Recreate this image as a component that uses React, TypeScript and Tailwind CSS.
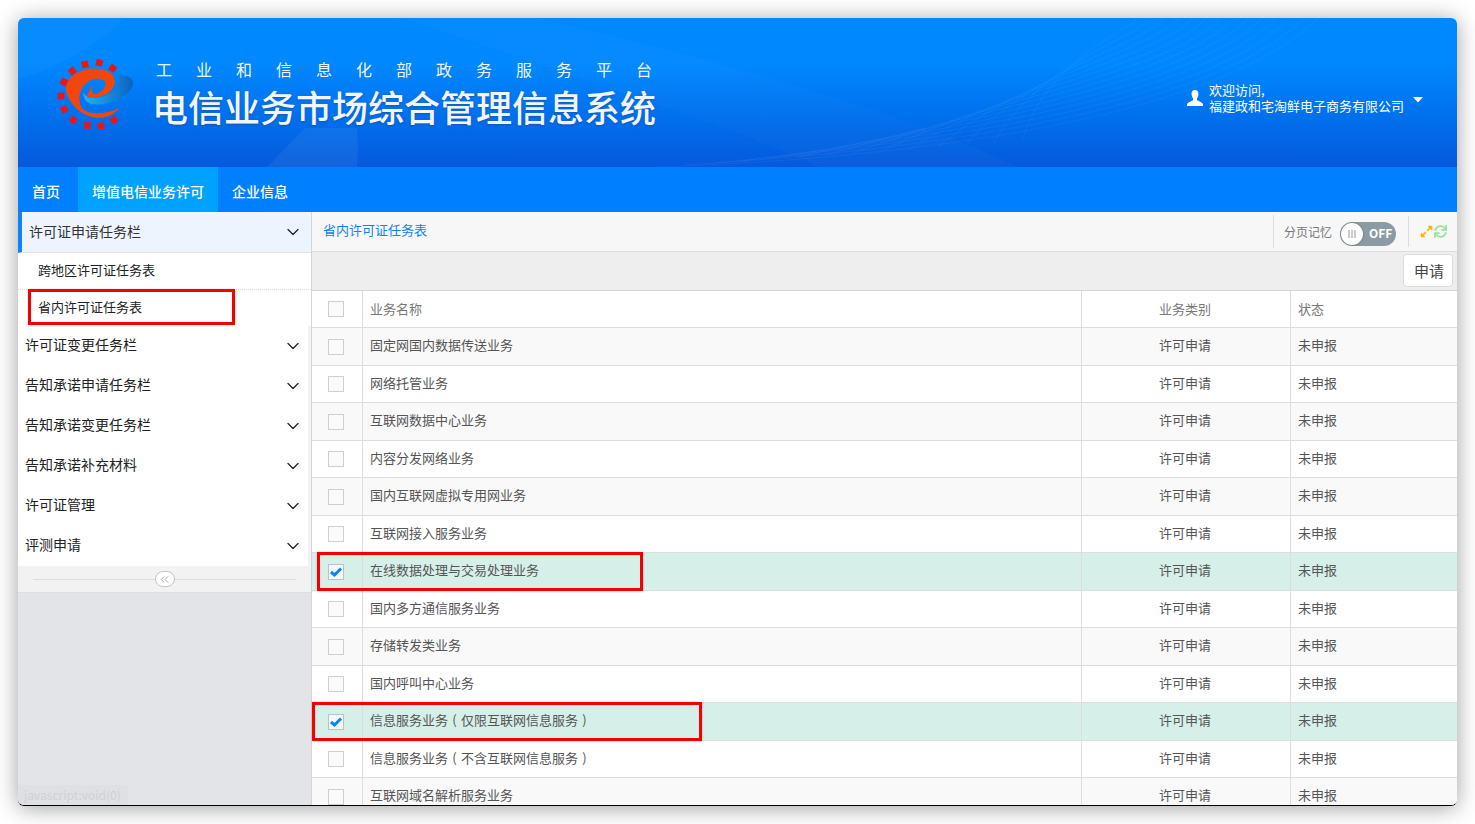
import React from "react";
import { ChevronDown, ChevronsLeft } from "lucide-react";
import { FaExpandAlt, FaSync } from "react-icons/fa";

const rows: [string, string, boolean][] = [
  ["固定网国内数据传送业务", "", false],
  ["网络托管业务", "", false],
  ["互联网数据中心业务", "", false],
  ["内容分发网络业务", "", false],
  ["国内互联网虚拟专用网业务", "", false],
  ["互联网接入服务业务", "", false],
  ["在线数据处理与交易处理业务", "", true],
  ["国内多方通信服务业务", "", false],
  ["存储转发类业务", "", false],
  ["国内呼叫中心业务", "", false],
  ["信息服务业务", "仅限互联网信息服务", true],
  ["信息服务业务", "不含互联网信息服务", false],
  ["互联网域名解析服务业务", "", false],
];
const menus = ["许可证变更任务栏", "告知承诺申请任务栏", "告知承诺变更任务栏", "告知承诺补充材料", "许可证管理", "评测申请"];

function Logo() {
  const squares = [
    [97, 75], [135, 55], [178, 50], [218, 67], [72, 108], [63, 150],
    [73, 190], [100, 222], [142, 238], [183, 240], [222, 222],
  ];
  return (
    <svg width="80" height="72" viewBox="48 33 240 216" className="shrink-0">
      <defs>
        <linearGradient id="sw" x1="0" y1="0" x2="1" y2="0">
          <stop offset="0" stopColor="#1fb4ee" />
          <stop offset="1" stopColor="#0a62c4" />
        </linearGradient>
      </defs>
      {squares.map(([x, y]) => {
        const deg = (Math.atan2(y - 150, x - 155) * 180) / Math.PI + 90;
        return <rect key={`${x}-${y}`} x={x - 10} y={y - 10} width="20" height="20" fill="#e8161a" transform={`rotate(${deg} ${x} ${y})`} />;
      })}
      <path d="M235 88 C265 85 285 100 278 120 C265 155 200 180 160 175 C140 172 130 160 130 140 C140 160 175 160 205 145 C230 130 245 110 235 88 Z" fill="url(#sw)" />
      <path d="M240 185 C215 215 170 225 135 205 C95 185 70 140 80 115 C90 85 130 65 170 68 C215 70 232 95 222 120 C212 145 175 160 140 155 C160 150 195 135 197 115 C198 100 170 92 148 105 C120 122 110 155 125 185 C140 205 190 210 240 185 Z" fill="#f2470c" />
      <path d="M140 150 C150 135 150 125 160 118 C150 130 155 145 175 148 C160 155 150 155 140 150 Z" fill="#f2470c" />
    </svg>
  );
}

function Check({ on }: { on: boolean }) {
  return (
    <span className={`flex h-4 w-4 items-center justify-center border ${on ? "border-[#b9c2c6] bg-[#f4f8fb]" : "border-[#cfcfcf] bg-[#fafafa]"}`}>
      {on && (
        <svg width="12" height="10" viewBox="0 0 12 10">
          <path d="M1 5 L4.5 8 L11 1.5" fill="none" stroke="#0a84ff" strokeWidth="3" />
        </svg>
      )}
    </span>
  );
}

export default function App() {
  return (
    <div className="h-[824px] w-[1475px] overflow-hidden bg-white px-[18px] pt-[18px] font-['Noto_Sans_CJK_SC','Liberation_Sans',sans-serif]">
      <div className="relative flex h-[788px] w-[1439px] flex-col overflow-hidden rounded-[6px] border-b-[1.5px] border-black bg-[#e3e4e7] shadow-[0_2px_22px_rgba(0,0,0,0.38)]">
        {/* header */}
        <header className="relative flex h-[149px] shrink-0 items-center overflow-hidden bg-gradient-to-b from-[#0088ff] from-30% to-[#0659dc]">
          <svg className="absolute inset-0" width="1439" height="149" viewBox="0 0 1439 149" fill="none">
            <path d="M0 62 C50 45 90 20 105 0 L0 0 Z" fill="#ffffff" fillOpacity="0.03" />
            <path d="M249 149 L287 110 L339 110 C340 125 340 138 339 149 Z" fill="#ffffff" fillOpacity="0.06" />
            {[0, 1, 2, 3, 4, 5, 6, 7, 8, 9, 10, 11, 12, 13].map((i) => (
              <path key={i} d={`M${640 + i * 28} ${149 - i * 2} C${900 + i * 10} ${140 - i * 8} ${1200 - i * 6} ${100 - i * 7} ${1300 - i * 14} 0`} stroke="#ffffff" strokeOpacity="0.05" />
            ))}
            <path d="M385 0 C560 60 720 110 800 149 L1000 149 C880 90 650 30 520 0 Z" fill="#ffffff" fillOpacity="0.02" />
          </svg>
          <div className="relative ml-[38px] flex items-center">
            <Logo />
            <div className="ml-[16px] pt-[1px] text-[#f2f5fb]">
              <div className="whitespace-nowrap pl-[4px] text-[16px] leading-[20px] tracking-[24px]">工业和信息化部政务服务平台</div>
              <div className="mt-[5px] whitespace-nowrap text-[36px] leading-[44px] font-medium [text-shadow:0_1px_2px_rgba(40,60,120,0.5)]">电信业务市场综合管理信息系统</div>
            </div>
          </div>
          <div className="relative ml-auto mr-[34px] mt-[11px] flex items-center text-white">
            <svg width="16" height="16" viewBox="0 0 16 16" fill="#fff" className="mr-[6px]">
              <path d="M8 0 C10.6 0 11.6 2 11.4 4.2 C11.3 6 10.6 7.6 9.8 8.6 L10 10 C11 11.2 15.2 12 16 14.2 L16 16 L0 16 L0 14.2 C0.8 12 5 11.2 6 10 L6.2 8.6 C5.4 7.6 4.7 6 4.6 4.2 C4.4 2 5.4 0 8 0 Z" />
            </svg>
            <div className="text-[13px] leading-[16px]">
              <div>欢迎访问,</div>
              <div className="whitespace-nowrap">福建政和宅淘鲜电子商务有限公司</div>
            </div>
            <svg width="10" height="6" viewBox="0 0 10 6" fill="#fff" className="ml-[9px] mt-[3px]">
              <path d="M0 0 H10 L5 5.5 Z" />
            </svg>
          </div>
        </header>
        {/* nav */}
        <nav className="flex h-[45px] shrink-0 bg-[#0080ff] text-[14px] font-medium text-white">
          <div className="flex w-[60px] items-center pl-[14px] pt-[4px]">首页</div>
          <div className="flex w-[140px] items-center bg-[#00a2ff] pl-[14px] pt-[4px]">增值电信业务许可</div>
          <div className="flex items-center px-[14px] pt-[4px]">企业信息</div>
        </nav>
        {/* body */}
        <div className="flex min-h-0 flex-1">
          <aside className="flex w-[294px] shrink-0 flex-col border-r border-[#d4d4d4] bg-[#e3e4e7]">
            <div className="flex h-[41px] shrink-0 items-center justify-between border-b border-[#e2e2e2] border-l-4 border-l-[#0a84ff] bg-[#edf4fe] pl-[7px] pr-[8px] text-[14px] text-[#333]">
              <span className="pb-[1px]">许可证申请任务栏</span>
              <ChevronDown size={20} strokeWidth={1.5} className="text-[#222]" />
            </div>
            <div className="bg-white">
              <div className="flex h-[37px] items-center border-b border-dotted border-[#ddd] pb-[2px] pl-[20px] text-[13px] text-[#222]">跨地区许可证任务表</div>
              <div className="flex h-[36px] items-center pb-[2px] pl-[20px] text-[13px] text-[#222]">省内许可证任务表</div>
            </div>
            <div className="bg-[#f2f2f2] pr-[3px]">
              {menus.map((m) => (
                <div key={m} className="flex h-[40px] items-center justify-between bg-white pl-[7px] pr-[5px] text-[14px] text-[#222]">
                  <span className="pb-[4px]">{m}</span>
                  <ChevronDown size={20} strokeWidth={1.5} className="text-[#222]" />
                </div>
              ))}
            </div>
            <div className="flex h-[27px] shrink-0 items-center border-b border-[#dedede] bg-[#f2f2f2] px-[15px]">
              <div className="h-px flex-1 bg-[#dcdcdc]" />
              <div className="flex h-[16px] w-[20px] items-center justify-center rounded-full border border-[#c4c4c4] bg-white text-[#999]">
                <ChevronsLeft size={13} strokeWidth={1.5} />
              </div>
              <div className="h-px flex-1 bg-[#dcdcdc]" />
            </div>
          </aside>
          <main className="flex min-w-0 flex-1 flex-col bg-white">
            <div className="flex h-[40px] shrink-0 items-center border-b border-[#dedede] bg-[#f7f7f7]">
              <span className="pb-[3px] pl-[11px] text-[13px] text-[#0a84ff]">省内许可证任务表</span>
              <div className="ml-auto flex h-[33px] items-center border-l border-[#dcdcdc] pl-[10px]">
                <span className="text-[12px] text-[#777]">分页记忆</span>
                <div className="ml-[8px] mt-[4px] flex h-[24px] w-[56px] items-center rounded-full bg-[#8a9ba3] p-px">
                  <span className="flex h-[22px] w-[22px] items-center justify-center rounded-full bg-white text-[10px] leading-none text-[#999] shadow-[0_0_2px_rgba(0,0,0,0.4)]">III</span>
                  <span className="ml-[6px] pb-[1px] text-[12px] font-bold text-white">OFF</span>
                </div>
              </div>
              <div className="ml-[12px] flex h-[31px] items-center gap-[1px] border-l border-[#dcdcdc] pl-[11px] pr-[10px]">
                <FaExpandAlt size={13} className="text-[#ffb400]" />
                <FaSync size={13} className="text-[#9fe29f]" />
              </div>
            </div>
            <div className="flex h-[39px] shrink-0 items-center justify-end border-b border-[#d4d4d4] bg-[#eeeeee] pr-[4px]">
              <button className="mb-[2px] h-[33px] w-[50px] rounded-[4px] border border-[#dcdcdc] bg-white pl-[2px] pt-[2px] text-[15px] text-[#444]">申请</button>
            </div>
            <div className="flex h-[37px] shrink-0 items-center border-b border-[#dddddd] text-[13px] text-[#777]">
              <div className="flex h-full w-[50px] items-center justify-center pr-[2px]"><Check on={false} /></div>
              <div className="flex h-full w-[719px] items-center border-l border-[#dddddd] pl-[7px]">业务名称</div>
              <div className="flex h-full w-[209px] items-center justify-center border-l border-[#dddddd] pr-[2px]">业务类别</div>
              <div className="flex h-full flex-1 items-center border-l border-[#dddddd] pl-[7px]">状态</div>
            </div>
            <div className="min-h-0 flex-1 overflow-hidden">
              {rows.map(([name, paren, on], i) => (
                <div key={name + paren} className={`flex h-[37.5px] items-center border-b border-[#dddddd] text-[13px] text-[#555] ${on ? "bg-[#d7efe9]" : i % 2 === 0 ? "bg-[#f9f9f9]" : "bg-white"}`}>
                  <div className="flex h-full w-[50px] items-center justify-center pr-[2px] pt-[1px]"><Check on={on} /></div>
                  <div className="flex h-full w-[719px] items-center border-l border-[#dddddd] pl-[7px]">
                    <span className="pb-[3px]">
                      {name}
                      {paren && (
                        <>
                          <span className="inline-block w-[13px] text-center">(</span>
                          {paren}
                          <span className="inline-block w-[13px] text-center">)</span>
                        </>
                      )}
                    </span>
                  </div>
                  <div className="flex h-full w-[209px] items-center justify-center border-l border-[#dddddd] pr-[2px]"><span className="pb-[3px]">许可申请</span></div>
                  <div className="flex h-full flex-1 items-center border-l border-[#dddddd] pl-[7px]"><span className="pb-[3px]">未申报</span></div>
                </div>
              ))}
            </div>
          </main>
        </div>
        {/* annotation boxes */}
        <div className="absolute left-[10px] top-[271px] h-[36px] w-[207px] border-[3px] border-[#f40000] shadow-[0_0_2px_rgba(0,0,0,0.2)]" />
        <div className="absolute left-[299px] top-[534px] h-[39px] w-[326px] border-[3px] border-[#f40000] shadow-[0_0_2px_rgba(0,0,0,0.2)]" />
        <div className="absolute left-[294px] top-[684px] h-[39px] w-[390px] border-[3px] border-[#f40000] shadow-[0_0_2px_rgba(0,0,0,0.2)]" />
        {/* status tooltip */}
        <div className="absolute bottom-0 left-0 flex h-[20px] w-[110px] items-center bg-[#dfe0e3] pl-[6px] text-[12px] text-[#d0d1d4]">javascript:void(0)</div>
        <svg className="absolute bottom-0 left-0" width="5" height="5" viewBox="0 0 5 5">
          <path d="M0 0 C0 3 2 5 5 5 L0 5 Z" fill="#000" />
        </svg>
      </div>
    </div>
  );
}
